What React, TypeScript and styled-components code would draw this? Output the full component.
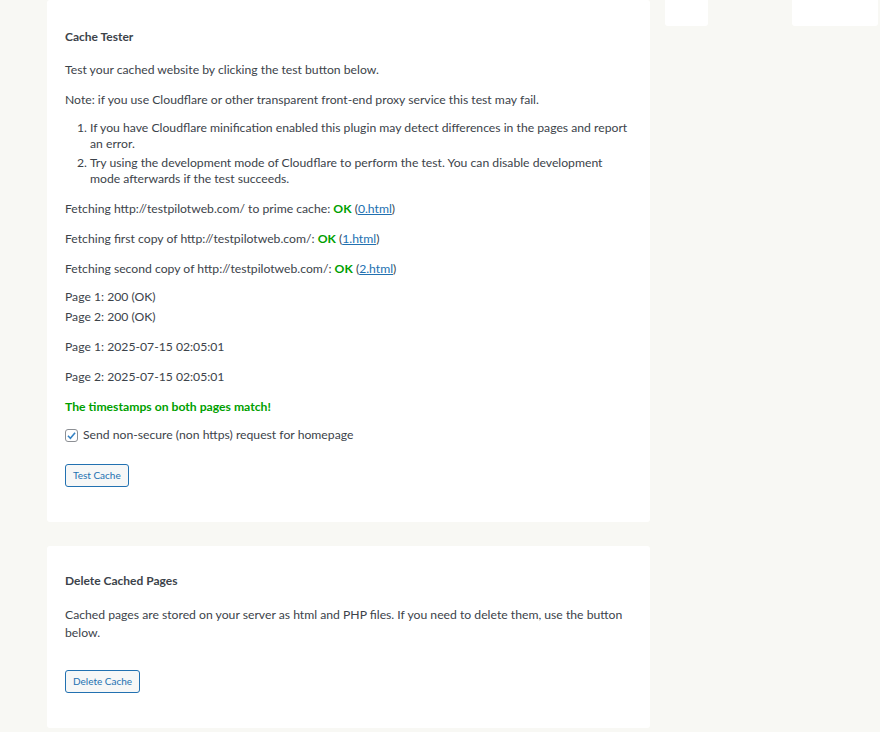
import React from "react";
import styled, { createGlobalStyle } from "styled-components";

const Global = createGlobalStyle`
  html, body { margin: 0; padding: 0; background: #f8f8f4; }
  body { font-family: "Segoe UI", Lato, sans-serif; font-size: 12.2px; color: #3c434a; }
`;

const Page = styled.div`
  display: flex;
  align-items: flex-start;
  padding-left: 47px;
  min-height: 732px;
`;

const Main = styled.div`
  width: 603px;
  display: flex;
  flex-direction: column;
  gap: 24px;
`;

const Side = styled.div`
  display: flex;
  gap: 84px;
  margin-left: 15px;
`;

const SideBox = styled.div<{ $w: number }>`
  width: ${(p) => p.$w}px;
  height: 26px;
  background: #fff;
  border-radius: 0 0 3px 3px;
`;

const Card = styled.section<{ $top: number; $bottom: number }>`
  background: #fff;
  border-radius: 3px;
  padding: ${(p) => p.$top}px 18px ${(p) => p.$bottom}px;
`;

const Title = styled.h3<{ $mb: number }>`
  margin: 0 0 ${(p) => p.$mb}px;
  font-size: 12px;
  font-weight: 700;
  line-height: 18px;
  color: #3c434a;
`;

const P = styled.p<{ $mb?: number }>`
  margin: 0 0 ${(p) => (p.$mb ?? 12)}px;
  line-height: 18px;
`;

const List = styled.ol`
  margin: 0 0 13px;
  padding-left: 25px;
  line-height: 16px;
`;

const Item = styled.li`
  margin-bottom: 3px;
`;

const Ok = styled.strong`
  color: #00a000;
  font-weight: 700;
`;

const Link = styled.a`
  color: #2271b1;
  text-decoration: underline;
`;

const Success = styled.p`
  margin: 0 0 10px;
  line-height: 18px;
  color: #00a000;
  font-weight: 700;
`;

const CheckRow = styled.label`
  display: flex;
  align-items: center;
  line-height: 18px;
  margin-bottom: 20px;
`;

const Box = styled.span`
  width: 13px;
  height: 13px;
  box-sizing: border-box;
  border: 1px solid #8c8f94;
  border-radius: 3px;
  background: #fff;
  display: inline-flex;
  align-items: center;
  justify-content: center;
  margin: 0 5px 0 0;
`;

const Button = styled.button`
  font-family: "Segoe UI", Lato, sans-serif;
  font-size: 10px;
  height: 23px;
  padding: 0 7px;
  border: 1px solid #2271b1;
  border-radius: 3px;
  background: #f6f7f7;
  color: #2271b1;
  line-height: 21px;
  cursor: pointer;
`;

export default function App() {
  return (
    <>
      <Global />
      <Page>
        <Main>
          <Card $top={28} $bottom={35}>
            <Title $mb={15}>Cache Tester</Title>
            <P>Test your cached website by clicking the test button below.</P>
            <P $mb={11}>Note: if you use Cloudflare or other transparent front-end proxy service this test may fail.</P>
            <List>
              <Item>If you have Cloudflare minification enabled this plugin may detect differences in the pages and report an error.</Item>
              <Item>Try using the development mode of Cloudflare to perform the test. You can disable development mode afterwards if the test succeeds.</Item>
            </List>
            <P>Fetching http://testpilotweb.com/ to prime cache: <Ok>OK</Ok> (<Link href="#">0.html</Link>)</P>
            <P>Fetching first copy of http://testpilotweb.com/: <Ok>OK</Ok> (<Link href="#">1.html</Link>)</P>
            <P $mb={10}>Fetching second copy of http://testpilotweb.com/: <Ok>OK</Ok> (<Link href="#">2.html</Link>)</P>
            <P $mb={2}>Page 1: 200 (OK)</P>
            <P>Page 2: 200 (OK)</P>
            <P>Page 1: 2025-07-15 02:05:01</P>
            <P>Page 2: 2025-07-15 02:05:01</P>
            <Success>The timestamps on both pages match!</Success>
            <CheckRow>
              <Box>
                <svg width="11" height="11" viewBox="0 0 20 20">
                  <path d="M3.5 10.5l4.5 4.5 8.5-10" fill="none" stroke="#3582c4" strokeWidth="2.8" />
                </svg>
              </Box>
              Send non-secure (non https) request for homepage
            </CheckRow>
            <div>
              <Button>Test Cache</Button>
            </div>
          </Card>
          <Card $top={26} $bottom={35}>
            <Title $mb={16}>Delete Cached Pages</Title>
            <P $mb={28}>Cached pages are stored on your server as html and PHP files. If you need to delete them, use the button below.</P>
            <div>
              <Button>Delete Cache</Button>
            </div>
          </Card>
        </Main>
        <Side>
          <SideBox $w={43} />
          <SideBox $w={86} />
        </Side>
      </Page>
    </>
  );
}
